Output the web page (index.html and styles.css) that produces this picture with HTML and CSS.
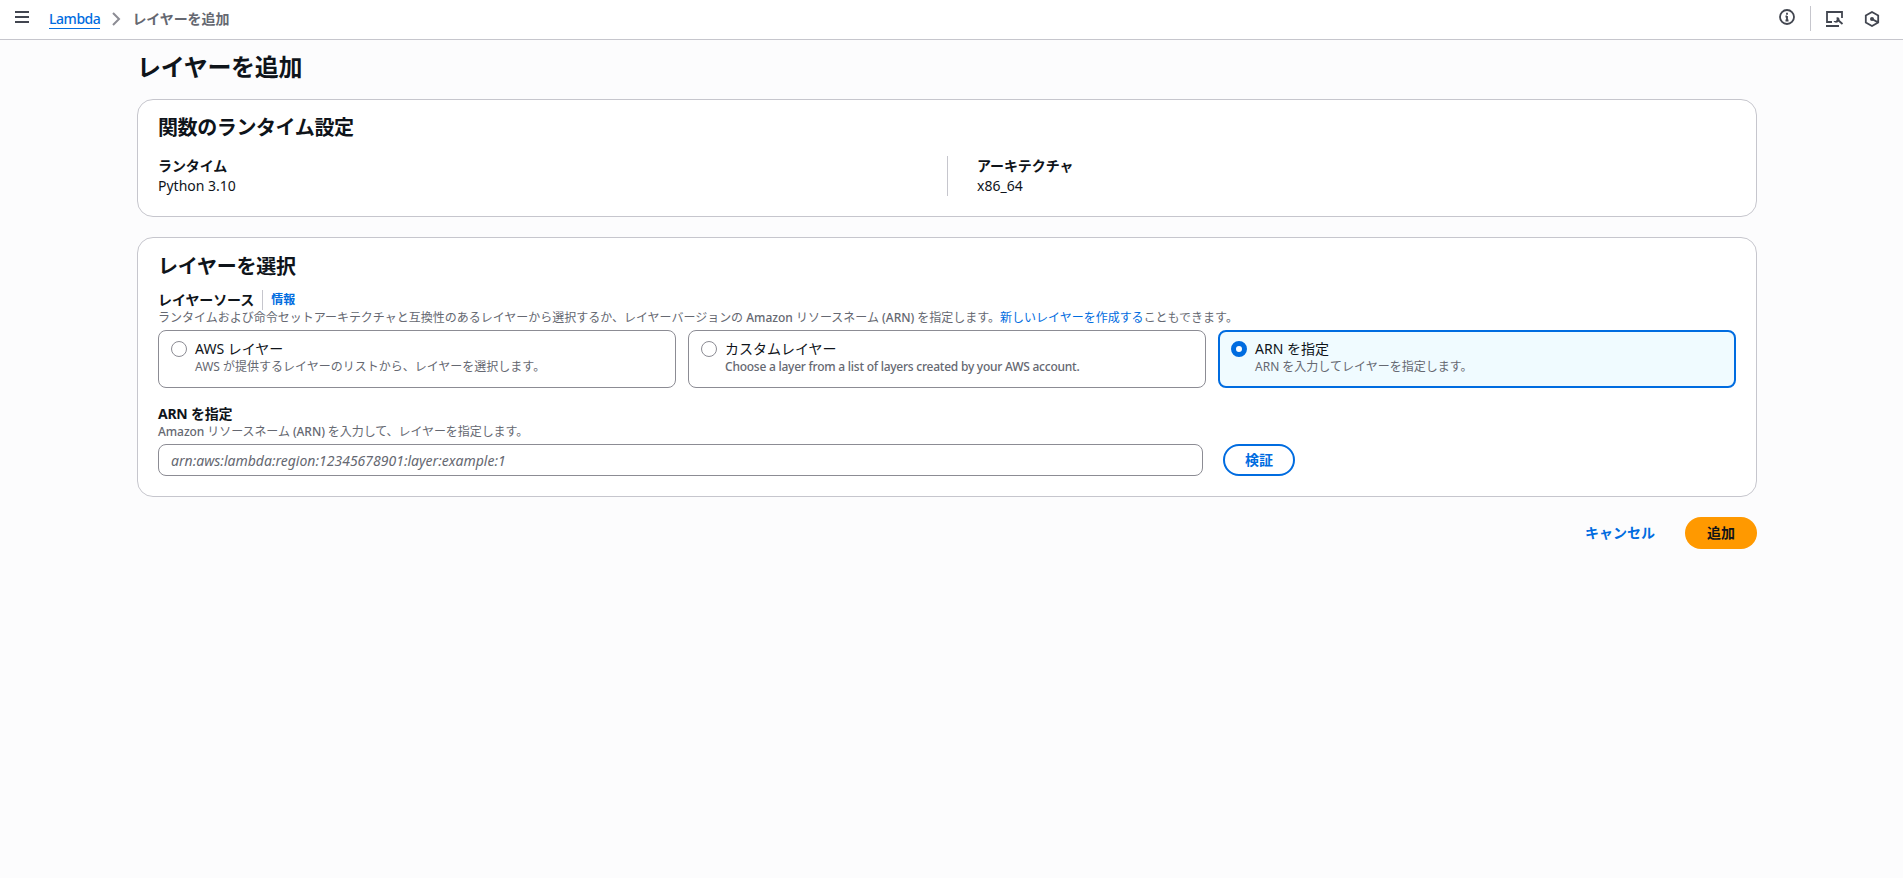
FILE: index.html
```html
<!DOCTYPE html>
<html lang="ja">
<head>
<meta charset="utf-8">
<title>レイヤーを追加 - Lambda</title>
<link rel="stylesheet" href="styles.css">
</head>
<body>
<header class="topbar">
  <svg class="menu" width="16" height="16" viewBox="0 0 16 16"><path d="M1 3h14M1 8h14M1 13h14"/></svg>
  <nav class="crumbs">
    <a class="crumb-link" href="#">Lambda</a>
    <svg class="chevron" width="10" height="16" viewBox="0 0 10 16"><path d="M2 2l6 6-6 6"/></svg>
    <span class="crumb-current">レイヤーを追加</span>
  </nav>
  <div class="tools">
    <svg class="info-icon" width="16" height="16" viewBox="0 0 16 16"><circle cx="8" cy="8" r="7"/><path d="M8 12V7M6.500 7.500H8M6.500 11.500h3M8 3.800v2"/></svg>
    <span class="tool-divider"></span>
    <svg class="console-icon" width="18" height="16" viewBox="0 0 18 16"><path d="M6 11H1V1h15v6M0 15h13M12 9l4.500 4"/><path class="wrench" d="M7.500 10h2.300l.9-.9-.2-2.600c2-.6 3.300.6 3 2.700l-1.700 2c-1.900.9-3.500.4-4.300-1.200z"/></svg>
    <svg class="hex-icon" width="16" height="16" viewBox="0 0 16 16"><path d="M8 1l6.200 3.500v7L8 15l-6.200-3.500v-7zM8 8l6 3.400"/><circle class="dot" cx="8" cy="8" r="2"/></svg>
  </div>
</header>
<main class="page">
  <h1 class="title">レイヤーを追加</h1>
  <section class="card">
    <h2 class="heading">関数のランタイム設定</h2>
    <div class="facts">
      <div class="fact"><div class="label">ランタイム</div><div class="value">Python 3.10</div></div>
      <div class="fact"><div class="label">アーキテクチャ</div><div class="value">x86_64</div></div>
    </div>
  </section>
  <section class="card">
    <h2 class="heading">レイヤーを選択</h2>
    <div class="label-row"><span class="label">レイヤーソース</span><a class="info" href="#">情報</a></div>
    <p class="hint">ランタイムおよび命令セットアーキテクチャと互換性のあるレイヤーから選択するか、レイヤーバージョンの <span class="latin">Amazon</span> リソースネーム <span class="latin">(ARN)</span> を指定します。<a href="#">新しいレイヤーを作成する</a>こともできます。</p>
    <div class="options">
      <label class="option"><span class="radio"></span><span class="option-text"><span class="option-title">AWS レイヤー</span><span class="hint">AWS が提供するレイヤーのリストから、レイヤーを選択します。</span></span></label>
      <label class="option"><span class="radio"></span><span class="option-text"><span class="option-title">カスタムレイヤー</span><span class="hint latin">Choose a layer from a list of layers created by your AWS account.</span></span></label>
      <label class="option selected"><span class="radio"></span><span class="option-text"><span class="option-title">ARN を指定</span><span class="hint">ARN を入力してレイヤーを指定します。</span></span></label>
    </div>
    <div class="label arn-label">ARN を指定</div>
    <p class="hint"><span class="latin">Amazon</span> リソースネーム <span class="latin">(ARN)</span> を入力して、レイヤーを指定します。</p>
    <div class="arn-row">
      <input class="arn" type="text" placeholder="arn:aws:lambda:region:12345678901:layer:example:1">
      <button class="btn outline">検証</button>
    </div>
  </section>
  <div class="actions">
    <button class="btn link">キャンセル</button>
    <button class="btn primary">追加</button>
  </div>
</main>
</body>
</html>
```
FILE: styles.css
```css
* { box-sizing: border-box; }
body {
  margin: 0;
  min-height: 100vh;
  background: #fcfcfd;
  color: #0f141a;
  font: 14px/20px "Noto Sans", "Noto Sans CJK JP", sans-serif;
}
h1, h2, p { margin: 0; }
a { color: #006ce0; text-decoration: none; }
svg { fill: none; stroke: #424650; stroke-width: 2; flex: none; }

.topbar {
  height: 40px;
  display: flex;
  align-items: flex-start;
  background: #fff;
  border-bottom: 1px solid #c6c6cd;
}
.menu { margin: 9px 0 0 14px; }
.crumbs { display: flex; align-items: center; margin: 9px 0 0 19px; }
.crumb-link { line-height: 19px; letter-spacing: -0.45px; font-weight: 500; border-bottom: 1px solid #006ce0; }
.chevron { stroke: #8c8c94; margin: 0 11px 0 11px; }
.crumb-current { color: #656871; font-weight: 700; letter-spacing: -0.1px; }
.tools { display: flex; margin: 0 23px 0 auto; }
.info-icon { margin-top: 9px; stroke-width: 1.8; }
.tool-divider { width: 1px; height: 25px; margin: 6px 15px 0; background: #c6c6cd; }
.console-icon { margin: 11px 20px 0 0; stroke-width: 1.8; }
.wrench, .dot { fill: #424650; stroke: none; }
.hex-icon { margin-top: 11px; stroke-width: 1.8; }

.page { width: 1620px; margin: 0 0 0 137px; }
.title { font-size: 24px; line-height: 30px; font-weight: 700; letter-spacing: -0.3px; padding: 12px 0 17px; }
.card {
  background: #fff;
  border: 1px solid #c6c6cd;
  border-radius: 16px;
  padding: 16px 20px 20px;
  margin-bottom: 20px;
}
.heading { font-size: 20px; line-height: 24px; font-weight: 700; letter-spacing: -0.4px; }
.label { font-weight: 700; letter-spacing: -0.1px; }
.facts { display: grid; grid-template-columns: 1fr 1fr; padding-top: 16px; }
.fact + .fact { border-left: 1px solid #c6c6cd; padding-left: 29px; }
.card + .card .heading { padding-top: 1px; letter-spacing: -0.25px; }
.label-row { display: flex; align-items: center; padding-top: 11px; }
.info { border-left: 1px solid #c6c6cd; margin-left: 8px; padding-left: 8px; font-size: 12px; font-weight: 700; }
.hint { display: block; font-size: 12px; line-height: 16px; color: #656871; }
p.hint { letter-spacing: -0.01px; }
.latin { font-weight: 500; }
.hint.latin { letter-spacing: -0.24px; }
.options { display: grid; grid-template-columns: repeat(3, 1fr); gap: 12px; margin-top: 4px; }
.option { display: flex; height: 58px; border: 1px solid #8c8c94; border-radius: 8px; padding: 8px 12px; }
.option-text { padding-left: 8px; }
.option-title { display: block; }
.radio { width: 16px; height: 16px; margin-top: 2px; border: 1px solid #8c8c94; border-radius: 50%; flex: none; }
.selected { background: #f0fbff; border: 2px solid #006ce0; padding: 7px 11px; }
.selected .radio { border: 5px solid #006ce0; background: #fff; }
.arn-label { margin-top: 16px; letter-spacing: -0.25px; }
.arn-label + .hint { letter-spacing: -0.07px; }
.arn-row { display: flex; gap: 20px; margin-top: 4px; }
.arn {
  width: 1045px;
  height: 32px;
  border: 1px solid #8c8c94;
  border-radius: 8px;
  padding: 0 12px;
  font: italic 14px/20px "Noto Sans", "Noto Sans CJK JP", sans-serif;
}
.arn::placeholder { color: #656871; opacity: 1; }
.btn {
  height: 32px;
  width: 72px;
  padding: 0 0 3px;
  border: 0;
  border-radius: 16px;
  background: none;
  font: 700 14px/20px "Noto Sans CJK JP", sans-serif;
}
.outline { border: 2px solid #006ce0; color: #006ce0; background: #fff; }
.link { color: #006ce0; }
.primary { background: #ff9900; color: #0f141a; }
.actions { display: flex; justify-content: flex-end; gap: 29px; }
```
